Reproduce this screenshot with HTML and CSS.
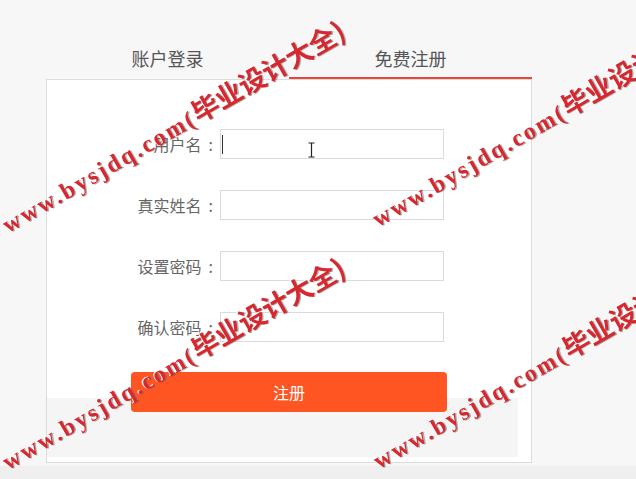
FILE: index.html
```html
<!DOCTYPE html>
<html lang="zh">
<head>
    <meta charset="UTF-8">
    <meta name="viewport" content="width=device-width, initial-scale=1.0">
    <title>免费注册</title>
    <link rel="stylesheet" href="styles.css">
</head>
<body>
    <div class="wrap">
        <div class="tabs">
            <div class="tab">账户登录</div>
            <div class="tab active">免费注册</div>
        </div>

        <form class="card" onsubmit="return false">
            <div class="row">
                <label class="label" for="username">用户名<span class="colon">:</span></label>
                <input class="field caret" id="username" type="text">
            </div>
            <div class="row">
                <label class="label" for="realname">真实姓名<span class="colon">:</span></label>
                <input class="field" id="realname" type="text">
            </div>
            <div class="row">
                <label class="label" for="password">设置密码<span class="colon">:</span></label>
                <input class="field" id="password" type="password">
            </div>
            <div class="row">
                <label class="label" for="confirm">确认密码<span class="colon">:</span></label>
                <input class="field" id="confirm" type="password">
            </div>
            <button class="submit-btn" type="submit">注册</button>
        </form>
    </div>
    <div class="page-foot"></div>

    <!-- mouse pointer in the first field -->
    <svg class="ibeam" width="9" height="16" viewBox="0 0 9 16" fill="none" stroke="#222" stroke-width="1.2">
        <path d="M1.5 1H7.5M4.5 1V15M1.5 15H7.5"/>
    </svg>

    <div class="watermark">
        <span class="wm wm-1"><span class="wm-en">www.bysjdq.com(</span>毕业设计大全)</span>
        <span class="wm wm-2"><span class="wm-en">www.bysjdq.com(</span>毕业设计大全)</span>
        <span class="wm wm-3"><span class="wm-en">www.bysjdq.com(</span>毕业设计大全)</span>
        <span class="wm wm-4"><span class="wm-en">www.bysjdq.com(</span>毕业设计大全)</span>
    </div>
</body>
</html>
```

FILE: styles.css
```css
html {
    background: #f7f7f8;
}

body {
    margin: 0;
    font-family: "Noto Sans CJK SC", "Noto Sans", sans-serif;
    color: #666;
    overflow: hidden;
}

.wrap {
    width: 486px;
    margin-left: 46px;
    padding-top: 39px;
}

.tabs {
    display: flex;
}

.tab {
    flex: 1;
    height: 38px;
    line-height: 38px;
    text-align: center;
    font-size: 18px;
    color: #555;
    border-bottom: 2px solid transparent;
}

.tab.active {
    border-bottom-color: #e8473b;
}

.card {
    display: flex;
    flex-direction: column;
    gap: 31px;
    margin: 0;
    padding: 49px 0 50px;
    border: 1px solid #dcdcdc;
    background: linear-gradient(#f5f5f5, #f5f5f5) 0 318px / 471px 59px no-repeat, #fff;
}

.row {
    display: flex;
    align-items: center;
    gap: 2px;
}

.label {
    width: 171px;
    text-align: right;
    font-size: 16px;
    color: #666;
}

.colon {
    padding: 0 5px 0 7px;
}

.field {
    width: 224px;
    height: 30px;
    box-sizing: border-box;
    border: 1px solid #dadada;
    padding: 0 8px;
    outline: none;
    background: #fff;
}

.field.caret {
    background: linear-gradient(#333, #333) 1px 5px / 1px 19px no-repeat, #fff;
}

.submit-btn {
    width: 316px;
    height: 40px;
    margin: -1px 0 0 84px;
    border: none;
    border-radius: 4px;
    background: #ff5522;
    color: #fff;
    font-family: inherit;
    font-size: 16px;
    cursor: pointer;
}

.page-foot {
    height: 14px;
    margin-top: 3px;
    background: #efefef;
}

.ibeam {
    position: absolute;
    left: 307px;
    top: 142px;
}

.watermark {
    position: fixed;
    inset: 0;
    pointer-events: none;
    overflow: hidden;
}

.wm {
    position: absolute;
    white-space: nowrap;
    font-family: "Noto Sans CJK SC", sans-serif;
    font-size: 27px;
    font-weight: bold;
    line-height: 1;
    color: #d6282e;
    text-shadow: -1px -1px 0 rgba(255, 255, 255, 0.9), 1px 1px 0 rgba(110, 110, 110, 0.55);
    transform: rotate(-30deg);
    transform-origin: 0 100%;
}

.wm-en {
    font-family: "Liberation Serif", serif;
    font-size: 24px;
    letter-spacing: 2.5px;
}

.wm-1 { left: 10px; top: 208px; }
.wm-2 { left: 380px; top: 202px; }
.wm-3 { left: 10px; top: 445px; }
.wm-4 { left: 381px; top: 444px; }
```
